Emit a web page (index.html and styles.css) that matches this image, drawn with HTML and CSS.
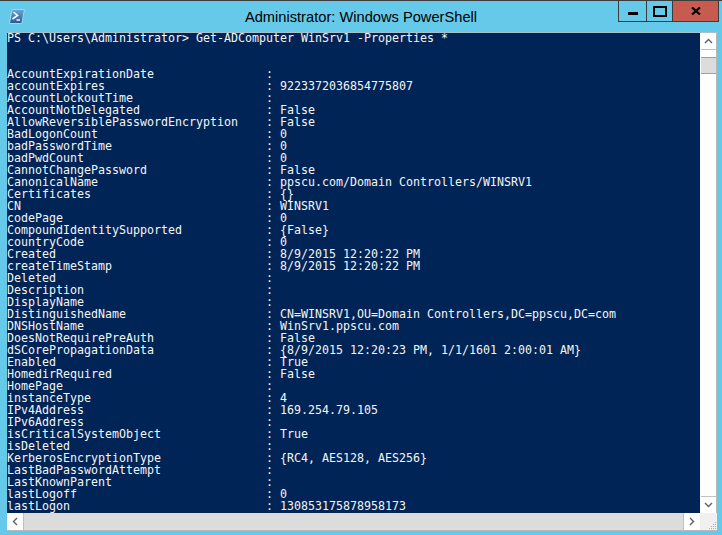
FILE: index.html
```html
<!DOCTYPE html>
<html lang="en">
<head>
<meta charset="utf-8">
<title>Administrator: Windows PowerShell</title>
<link rel="stylesheet" href="styles.css">
</head>
<body>
<div class="window">
<header class="titlebar">
<svg class="app-icon" width="16" height="15" viewBox="0 0 16 15"><defs><linearGradient id="ps" x1="0" y1="0" x2="0" y2="1"><stop offset="0" stop-color="#6aa8d8"/><stop offset="1" stop-color="#1f5a96"/></linearGradient></defs><path d="M3 0.5H15.5L12.8 14.5H0.5Z" fill="url(#ps)" stroke="#a9d4ea"/><path d="M4.5 3L8.5 6.5L3.5 10" fill="none" stroke="#fff" stroke-width="1.6"/><path d="M7.5 11H11" stroke="#fff" stroke-width="1.4"/></svg>
<h1 class="title">Administrator: Windows PowerShell</h1>
<div class="controls">
<div class="ctl ctl-min"><span class="min-glyph"></span></div>
<div class="ctl ctl-max"><span class="max-glyph"></span></div>
<div class="ctl ctl-close"><svg width="10" height="8" viewBox="0 0 10 8"><path d="M1 0.5L9 7.5M9 0.5L1 7.5" stroke="#000" stroke-width="2.2"/></svg></div>
</div>
</header>
<main class="client">
<div class="upper">
<div class="console">
<pre class="output">PS C:\Users\Administrator&gt; Get-ADComputer WinSrv1 -Properties *


AccountExpirationDate                : 
accountExpires                       : 9223372036854775807
AccountLockoutTime                   : 
AccountNotDelegated                  : False
AllowReversiblePasswordEncryption    : False
BadLogonCount                        : 0
badPasswordTime                      : 0
badPwdCount                          : 0
CannotChangePassword                 : False
CanonicalName                        : ppscu.com/Domain Controllers/WINSRV1
Certificates                         : {}
CN                                   : WINSRV1
codePage                             : 0
CompoundIdentitySupported            : {False}
countryCode                          : 0
Created                              : 8/9/2015 12:20:22 PM
createTimeStamp                      : 8/9/2015 12:20:22 PM
Deleted                              : 
Description                          : 
DisplayName                          : 
DistinguishedName                    : CN=WINSRV1,OU=Domain Controllers,DC=ppscu,DC=com
DNSHostName                          : WinSrv1.ppscu.com
DoesNotRequirePreAuth                : False
dSCorePropagationData                : {8/9/2015 12:20:23 PM, 1/1/1601 2:00:01 AM}
Enabled                              : True
HomedirRequired                      : False
HomePage                             : 
instanceType                         : 4
IPv4Address                          : 169.254.79.105
IPv6Address                          : 
isCriticalSystemObject               : True
isDeleted                            : 
KerberosEncryptionType               : {RC4, AES128, AES256}
LastBadPasswordAttempt               : 
LastKnownParent                      : 
lastLogoff                           : 0
lastLogon                            : 130853175878958173</pre>
</div>
<aside class="vscroll">
<div class="arrow arrow-up"><svg width="9" height="6" viewBox="0 0 9 6"><path d="M1 5L4.5 1.5L8 5" fill="none" stroke="#606060" stroke-width="1.4"/></svg></div>
<div class="vtrack"><div class="vthumb"></div></div>
<div class="arrow arrow-down"><svg width="9" height="6" viewBox="0 0 9 6"><path d="M1 1L4.5 4.5L8 1" fill="none" stroke="#606060" stroke-width="1.4"/></svg></div>
</aside>
</div>
<div class="hscroll">
<div class="harrow harrow-left"><svg width="6" height="9" viewBox="0 0 6 9"><path d="M5 1L1.5 4.5L5 8" fill="none" stroke="#606060" stroke-width="1.4"/></svg></div>
<div class="hthumb"></div>
<div class="harrow harrow-right"><svg width="6" height="9" viewBox="0 0 6 9"><path d="M1 1L4.5 4.5L1 8" fill="none" stroke="#606060" stroke-width="1.4"/></svg></div>
<div class="grip"><svg width="9" height="9" viewBox="0 0 9 9"><path d="M7 1h1v1H7zM5 3h1v1H5zM7 3h1v1H7zM3 5h1v1H3zM5 5h1v1H5zM7 5h1v1H7zM1 7h1v1H1zM3 7h1v1H3zM5 7h1v1H5zM7 7h1v1H7z" fill="#b0b0b0"/></svg></div>
</div>
</main>
</div>
</body>
</html>
```

FILE: styles.css
```css
html, body { margin: 0; padding: 0; }
body { width: 722px; height: 535px; overflow: hidden; background: #65c9ea; }
.window { display: flex; flex-direction: column; height: 535px; box-sizing: border-box; border-top: 1px solid #3c3c3c; background: #65c9ea; }
.titlebar { display: flex; height: 30px; padding: 0 3px 0 9px; align-items: flex-start; position: relative; }
.app-icon { margin-top: 8px; }
.title { position: absolute; left: 0; right: 0; top: 7px; margin: 0; text-align: center; font: 400 14.67px/18px "Liberation Sans", Arial, sans-serif; color: #000; }
.controls { display: flex; margin-left: auto; height: 21px; position: relative; }
.ctl { box-sizing: border-box; height: 21px; display: flex; align-items: center; justify-content: center; border: 1px solid #3c3c3c; border-top: 0; }
.ctl-min { width: 29px; }
.ctl-max { width: 26px; border-left: 0; }
.ctl-close { width: 46px; border-left: 0; background: #c75b50; }
.min-glyph { width: 10px; height: 3px; background: #000; margin-top: 4px; }
.max-glyph { width: 10px; height: 7px; border: 2px solid #000; }
.client { display: flex; flex-direction: column; margin: 1px 5px 0 7px; border-top: 1px solid #a9bfca; }
.upper { display: flex; }
.console { flex: 1; min-width: 0; height: 480px; background: #012456; }
.output { margin: -1px 0 0; color: #f5f5f5; font: 400 11.63px/12px "DejaVu Sans Mono", monospace; }
.vscroll { width: 17px; display: flex; flex-direction: column; background: #fff; box-sizing: border-box; border-right: 1px solid #b8b8b8; border-left: 1px solid #fff; }
.arrow { height: 17px; display: flex; align-items: center; justify-content: center; flex: none; box-sizing: border-box; }
.arrow-up { border-bottom: 1px solid #c0c0c0; }
.arrow-down { border-top: 1px solid #c0c0c0; }
.vtrack { flex: 1; padding-top: 7px; }
.vthumb { height: 17px; box-sizing: border-box; background: #dcdcdc; border-top: 1px solid #a0a0a0; border-bottom: 1px solid #a0a0a0; }
.hscroll { display: flex; height: 18px; box-sizing: border-box; border-bottom: 1px solid #b8b8b8; background: #fff; }
.harrow { width: 17px; display: flex; align-items: center; justify-content: center; flex: none; box-sizing: border-box; }
.harrow-left { border-right: 1px solid #c0c0c0; }
.harrow-right { border-left: 1px solid #c0c0c0; }
.hthumb { flex: 1; background: #dcdcdc; }
.grip { width: 17px; flex: none; background: #f0f0f0; display: flex; align-items: flex-end; justify-content: flex-end; }
```
